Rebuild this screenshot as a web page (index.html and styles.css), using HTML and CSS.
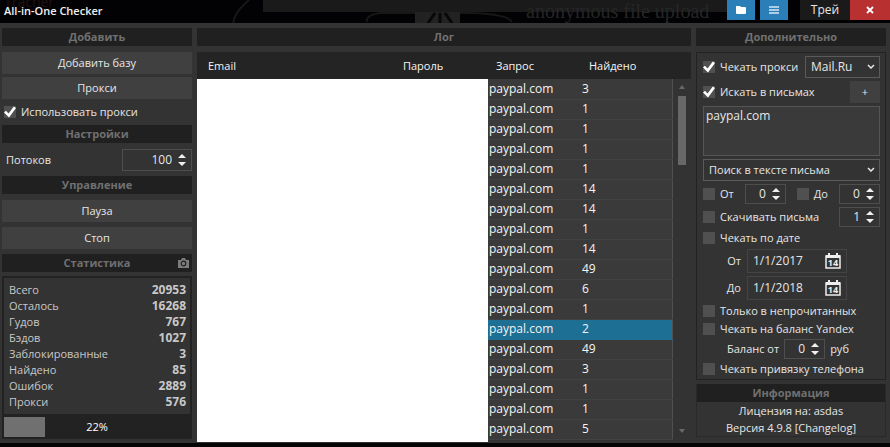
FILE: index.html
```html
<!DOCTYPE html>
<html lang="ru">
  <head>
    <meta charset="UTF-8" />
    <title>All-in-One Checker</title>
    <link rel="stylesheet" href="styles.css">
  </head>
  <body>
    <header class="titlebar">
      <div class="glass" aria-hidden="true">
        <span class="glass-name">Tracher</span>
        <span class="glass-panel"></span>
        <svg class="glass-mask" viewBox="0 0 290 23" width="290" height="23">
          <path d="M4 23C6 13 12 7 20 0" fill="none" stroke="#17171b" stroke-width="2" />
          <path d="M138 22q-2-7 14-9h34M231 13h10q38 1 42 9" fill="none" stroke="#171717" stroke-width="2" />
          <path d="M186 12h45v11h-45z" fill="#222" />
          <path d="M206 13l-7 10M211 13v10M216 13l7 10" fill="none" stroke="#080808" stroke-width="3" />
        </svg>
        <span class="glass-text">anonymous file upload</span>
      </div>
      <h1>All-in-One Checker</h1>
      <div class="window-buttons">
        <button type="button" class="blue" aria-label="Папка">
          <svg viewBox="0 0 12 10" width="12" height="10"><path d="M1 1h4l1 1h4q1 0 1 1v5q0 1-1 1H2q-1 0-1-1z" fill="#fff" /></svg>
        </button>
        <button type="button" class="blue" aria-label="Меню">
          <svg viewBox="0 0 12 10" width="12" height="10"><path d="M1 2h10M1 5h10M1 8h10" stroke="#d8e8f4" stroke-width="1.4" /></svg>
        </button>
        <button type="button" class="tray">Трей</button>
        <button type="button" class="close" aria-label="Закрыть">
          <svg viewBox="0 0 8 8" width="8" height="8"><path d="M1 1l6 6M7 1L1 7" stroke="#fff" stroke-width="1.8" /></svg>
        </button>
      </div>
    </header>

    <main class="window">
      <section class="column">
        <h2>Добавить</h2>
        <div class="buttons">
          <button type="button" class="btn">Добавить базу</button>
          <button type="button" class="btn">Прокси</button>
        </div>
        <label class="check use-proxy"><input type="checkbox" checked />Использовать прокси</label>
        <h2>Настройки</h2>
        <div class="row threads">
          <label for="threads">Потоков</label>
          <div class="spin wide">
            <input type="text" id="threads" value="100" />
            <svg viewBox="0 0 8 14" width="8" height="14"><path d="M0 5l4-4 4 4zM0 9l4 4 4-4z" /></svg>
          </div>
        </div>
        <h2>Управление</h2>
        <div class="buttons control">
          <button type="button" class="btn">Пауза</button>
          <button type="button" class="btn">Стоп</button>
        </div>
        <h2 class="with-icon">
          Статистика
          <svg class="camera" viewBox="0 0 11 10" width="11" height="10">
            <path d="M0 2h3l1-2h3l1 2h3v8H0z" fill="#7c7c7c" />
            <circle cx="5.5" cy="5.5" r="2.3" fill="none" stroke="#202020" stroke-width="1.2" />
          </svg>
        </h2>
        <div class="stats-box">
          <table class="stats">
            <tr><th>Всего</th><td>20953</td></tr>
            <tr><th>Осталось</th><td>16268</td></tr>
            <tr><th>Гудов</th><td>767</td></tr>
            <tr><th>Бэдов</th><td>1027</td></tr>
            <tr><th>Заблокированные</th><td>3</td></tr>
            <tr><th>Найдено</th><td>85</td></tr>
            <tr><th>Ошибок</th><td>2889</td></tr>
            <tr><th>Прокси</th><td>576</td></tr>
          </table>
          <div class="progress">
            <div class="progress-bar" style="width: 22%"></div>
            <span>22%</span>
          </div>
        </div>
      </section>

      <section class="column">
        <h2>Лог</h2>
        <div class="log">
          <table class="log-table">
            <thead>
              <tr>
                <th class="col-email">Email</th>
                <th class="col-pass">Пароль</th>
                <th class="col-query">Запрос</th>
                <th>Найдено</th>
                <th class="col-scroll"></th>
              </tr>
            </thead>
            <tbody>
              <tr><td></td><td></td><td>paypal.com</td><td>3</td></tr>
              <tr><td></td><td></td><td>paypal.com</td><td>1</td></tr>
              <tr><td></td><td></td><td>paypal.com</td><td>1</td></tr>
              <tr><td></td><td></td><td>paypal.com</td><td>1</td></tr>
              <tr><td></td><td></td><td>paypal.com</td><td>1</td></tr>
              <tr><td></td><td></td><td>paypal.com</td><td>14</td></tr>
              <tr><td></td><td></td><td>paypal.com</td><td>14</td></tr>
              <tr><td></td><td></td><td>paypal.com</td><td>1</td></tr>
              <tr><td></td><td></td><td>paypal.com</td><td>14</td></tr>
              <tr><td></td><td></td><td>paypal.com</td><td>49</td></tr>
              <tr><td></td><td></td><td>paypal.com</td><td>6</td></tr>
              <tr><td></td><td></td><td>paypal.com</td><td>1</td></tr>
              <tr class="selected"><td></td><td></td><td>paypal.com</td><td>2</td></tr>
              <tr><td></td><td></td><td>paypal.com</td><td>49</td></tr>
              <tr><td></td><td></td><td>paypal.com</td><td>3</td></tr>
              <tr><td></td><td></td><td>paypal.com</td><td>1</td></tr>
              <tr><td></td><td></td><td>paypal.com</td><td>1</td></tr>
              <tr><td></td><td></td><td>paypal.com</td><td>5</td></tr>
            </tbody>
          </table>
          <div class="cover"></div>
          <div class="scrollbar">
            <svg viewBox="0 0 6 4" width="6" height="4"><path d="M0 4l3-4 3 4z" /></svg>
            <div class="thumb"></div>
            <svg viewBox="0 0 6 4" width="6" height="4"><path d="M0 0l3 4 3-4z" /></svg>
          </div>
        </div>
      </section>

      <section class="column">
        <h2>Дополнительно</h2>
        <div class="options">
          <div class="row">
            <label class="check"><input type="checkbox" checked />Чекать прокси</label>
            <div class="select domain">
              <select aria-label="Домен"><option>Mail.Ru</option></select>
              <svg viewBox="0 0 8 5" width="8" height="5"><path d="M1 1l3 3 3-3" /></svg>
            </div>
          </div>
          <div class="row">
            <label class="check"><input type="checkbox" checked />Искать в письмах</label>
            <button type="button" class="btn plus">+</button>
          </div>
          <textarea aria-label="Запросы">paypal.com</textarea>
          <div class="select mode">
            <select aria-label="Режим поиска"><option>Поиск в тексте письма</option></select>
            <svg viewBox="0 0 8 5" width="8" height="5"><path d="M1 1l3 3 3-3" /></svg>
          </div>
          <div class="row low">
            <label class="check"><input type="checkbox" />От</label>
            <div class="spin">
              <input type="text" aria-label="От" value="0" />
              <svg viewBox="0 0 8 14" width="8" height="14"><path d="M0 5l4-4 4 4zM0 9l4 4 4-4z" /></svg>
            </div>
            <label class="check"><input type="checkbox" />До</label>
            <div class="spin">
              <input type="text" aria-label="До" value="0" />
              <svg viewBox="0 0 8 14" width="8" height="14"><path d="M0 5l4-4 4 4zM0 9l4 4 4-4z" /></svg>
            </div>
          </div>
          <div class="row low">
            <label class="check"><input type="checkbox" />Скачивать письма</label>
            <div class="spin">
              <input type="text" aria-label="Количество писем" value="1" />
              <svg viewBox="0 0 8 14" width="8" height="14"><path d="M0 5l4-4 4 4zM0 9l4 4 4-4z" /></svg>
            </div>
          </div>
          <label class="check"><input type="checkbox" />Чекать по дате</label>
          <div class="row date-row">
            <label for="dateFrom">От</label>
            <div class="date">
              <input type="text" id="dateFrom" value="1/1/2017" />
              <svg viewBox="0 0 16 16" width="16" height="16">
                <path d="M1 3h14v12H1z" fill="none" stroke="#eee" stroke-width="1.5" />
                <path d="M1 2h14v3H1zM3 0h2v3H3zM11 0h2v3h-2z" fill="#eee" />
                <text x="8" y="13" text-anchor="middle">14</text>
              </svg>
            </div>
          </div>
          <div class="row date-row">
            <label for="dateTo">До</label>
            <div class="date">
              <input type="text" id="dateTo" value="1/1/2018" />
              <svg viewBox="0 0 16 16" width="16" height="16">
                <path d="M1 3h14v12H1z" fill="none" stroke="#eee" stroke-width="1.5" />
                <path d="M1 2h14v3H1zM3 0h2v3H3zM11 0h2v3h-2z" fill="#eee" />
                <text x="8" y="13" text-anchor="middle">14</text>
              </svg>
            </div>
          </div>
          <div class="filters">
            <label class="check"><input type="checkbox" />Только в непрочитанных</label>
            <label class="check"><input type="checkbox" />Чекать на баланс Yandex</label>
            <div class="row low balance">
              <label for="balance">Баланс от</label>
              <div class="spin">
                <input type="text" id="balance" value="0" />
                <svg viewBox="0 0 8 14" width="8" height="14"><path d="M0 5l4-4 4 4zM0 9l4 4 4-4z" /></svg>
              </div>
              <span>руб</span>
            </div>
            <label class="check"><input type="checkbox" />Чекать привязку телефона</label>
          </div>
        </div>
        <div class="info">
          <h2>Информация</h2>
          <p>Лицензия на: asdas</p>
          <p>Версия 4.9.8 <a href="#">[Changelog]</a></p>
        </div>
      </section>
    </main>
  </body>
</html>
```
FILE: styles.css
```css
* {
  box-sizing: border-box;
}

body {
  margin: 0;
  min-height: 100vh;
  background-color: #050505;
  color: #e6e6e6;
  font-family: "Open Sans", "Noto Sans", sans-serif;
  font-size: 11px;
  line-height: 16px;
}

button,
input,
select,
textarea {
  font: inherit;
  color: inherit;
  margin: 0;
  border: none;
  background: none;
}

/* title bar */
.titlebar {
  position: relative;
  display: flex;
  justify-content: space-between;
  align-items: flex-start;
  height: 23px;
  padding-left: 4px;
  background-color: #020204;
  overflow: hidden;
}

.titlebar h1 {
  position: relative;
  margin: 0;
  padding-top: 3px;
  font-size: 11px;
  line-height: 16px;
  font-weight: 600;
  color: #f0f0f0;
}

.glass {
  position: absolute;
  inset: 0;
}

.glass-name {
  position: absolute;
  left: 4px;
  top: -6px;
  color: #221012;
  font-size: 14px;
}

.glass-panel {
  position: absolute;
  left: 263px;
  right: 150px;
  top: 0;
  height: 12px;
  background-color: #1a1a1a;
}

.glass-mask {
  position: absolute;
  left: 229px;
  top: 0;
}

.glass-text {
  position: absolute;
  left: 526px;
  top: 0;
  font-family: "Liberation Serif", serif;
  font-size: 20px;
  line-height: 22px;
  color: #262626;
}

.window-buttons {
  position: relative;
  display: flex;
}

.window-buttons button {
  height: 20px;
  padding: 0;
  display: flex;
  align-items: center;
  justify-content: center;
}

.window-buttons .blue {
  width: 28px;
  margin-right: 5px;
  background-color: #2a7fb8;
}

.window-buttons .tray {
  width: 50px;
  margin-left: 7px;
  background-color: #1a1a1a;
  font-size: 12px;
}

.window-buttons .close {
  width: 40px;
  background-color: #b93030;
}

/* columns */
.window {
  display: grid;
  grid-template-columns: 190px 1fr 190px;
  gap: 5px;
  padding: 5px 4px 3px 2px;
  background-color: #333;
}

.column {
  display: flex;
  flex-direction: column;
  min-width: 0;
}

h2 {
  margin: 0;
  height: 18px;
  background-color: #202020;
  color: #707070;
  font-size: 11px;
  line-height: 18px;
  font-weight: 700;
  text-align: center;
}

.with-icon {
  position: relative;
}

.camera {
  position: absolute;
  right: 3px;
  top: 4px;
}

.buttons {
  display: flex;
  flex-direction: column;
  gap: 3px;
  margin-top: 6px;
}

.control {
  gap: 5px;
  margin-bottom: 5px;
}

.btn {
  height: 22px;
  padding: 0;
  background-color: #404040;
}

.row {
  display: flex;
  align-items: center;
  justify-content: space-between;
  height: 22px;
}

.threads {
  margin: 6px 0 5px;
  padding-left: 4px;
}

.check {
  display: flex;
  align-items: center;
  gap: 5px;
  height: 16px;
  white-space: nowrap;
}

.use-proxy {
  margin: 5px 0;
  padding-left: 2px;
}

.check input {
  appearance: none;
  width: 12px;
  height: 12px;
  background-color: #505050;
}

.check input:checked::before {
  content: "";
  display: block;
  width: 12px;
  height: 12px;
  background-color: #fff;
  clip-path: polygon(0 55%, 16% 40%, 38% 62%, 82% 4%, 100% 16%, 42% 96%);
}

.spin {
  display: flex;
  align-items: center;
  width: 41px;
  height: 20px;
  padding-right: 5px;
  border: 1px solid #4e4e4e;
}

.spin.wide {
  width: 70px;
  height: 22px;
}

.spin input {
  flex: 1;
  min-width: 0;
  padding: 0 6px 0 0;
  font-size: 12px;
  text-align: right;
}

.spin svg {
  flex: none;
  fill: #f0f0f0;
}

/* statistics */
.stats-box {
  margin-top: 4px;
  padding: 2px;
  background-color: #222;
}

.stats {
  width: 100%;
  padding: 4px 4px 4px 5px;
  border-spacing: 0;
  background-color: #333;
}

.stats th,
.stats td {
  height: 16px;
  padding: 0;
  font-weight: 400;
  text-align: left;
  color: #c8c8c8;
}

.stats td {
  font-size: 12px;
  font-weight: 700;
  text-align: right;
}

.progress {
  position: relative;
  height: 20px;
  margin-top: 3px;
}

.progress-bar {
  height: 20px;
  background-color: #707070;
}

.progress span {
  position: absolute;
  inset: 2px 0 0;
  text-align: center;
  color: #fff;
}

/* log */
.log {
  position: relative;
  margin-top: 6px;
  flex: 1;
}

.log-table {
  width: 100%;
  table-layout: fixed;
  border-collapse: collapse;
  color: #f4f4f4;
}

.log-table th {
  height: 27px;
  padding: 0 0 0 11px;
  background-color: #242424;
  font-weight: 400;
  text-align: left;
}

.col-email {
  width: 195px;
}

.col-pass,
.col-query {
  width: 93px;
}

.col-scroll {
  width: 19px;
}

.log-table td {
  height: 20px;
  padding: 0 0 0 4px;
  background-color: #3a3a3a;
  border-bottom: 1px solid #424242;
  font-size: 12px;
}

.log-table td:last-child {
  border-right: 1px solid #505050;
}

.log-table .selected td {
  background-color: #1d6f94;
  border-bottom-color: #1d6f94;
}

/* white box that hides the email and password cells */
.cover {
  position: absolute;
  left: 0;
  top: 27px;
  bottom: -2px;
  width: 291px;
  background-color: #fff;
}

.scrollbar {
  position: absolute;
  right: 5px;
  top: 33px;
  bottom: 7px;
  width: 8px;
  display: flex;
  flex-direction: column;
  align-items: center;
}

.scrollbar svg {
  fill: #686868;
}

.thumb {
  width: 8px;
  height: 69px;
  margin: 7px 0 auto;
  background-color: #686868;
}

/* options */
.options {
  display: flex;
  flex-direction: column;
  gap: 3px;
  margin-top: 6px;
  padding: 3px 5px 2px 6px;
  border: 1px solid #222;
}

.filters {
  display: flex;
  flex-direction: column;
  gap: 2px;
}

.select {
  position: relative;
  height: 22px;
}

.domain {
  width: 75px;
  font-size: 12px;
}

.select select {
  appearance: none;
  width: 100%;
  height: 22px;
  padding: 0 5px;
  border: 1px solid #5a5a5a;
  border-radius: 0;
}

.select svg {
  position: absolute;
  right: 5px;
  top: 8px;
  fill: none;
  stroke: #e8e8e8;
  stroke-width: 1.5;
}

.plus {
  width: 30px;
}

textarea {
  display: block;
  width: 100%;
  height: 50px;
  padding: 1px 2px;
  border: 1px solid #555;
  background-color: #3a3a3a;
  font-size: 12px;
  resize: none;
}

.low {
  height: 20px;
}

.date-row {
  justify-content: flex-start;
  height: 24px;
}

.date-row label {
  width: 44px;
  padding-right: 6px;
  text-align: right;
}

.date {
  display: flex;
  align-items: center;
  width: 100px;
  height: 24px;
  padding: 0 5px;
  border: 1px solid #444;
}

.date input {
  flex: 1;
  min-width: 0;
  padding: 0;
  font-size: 12px;
}

.date text {
  font-family: "Open Sans", sans-serif;
  font-size: 9px;
  font-weight: 700;
  fill: #eee;
}

.balance {
  justify-content: flex-start;
  gap: 5px;
  padding-left: 24px;
}

/* info */
.info {
  margin-top: 4px;
  border: 1px solid #292929;
  border-top: none;
}

.info p {
  margin: 1px 0 0;
  text-align: center;
}

.info a {
  color: inherit;
  text-decoration: none;
}
```
